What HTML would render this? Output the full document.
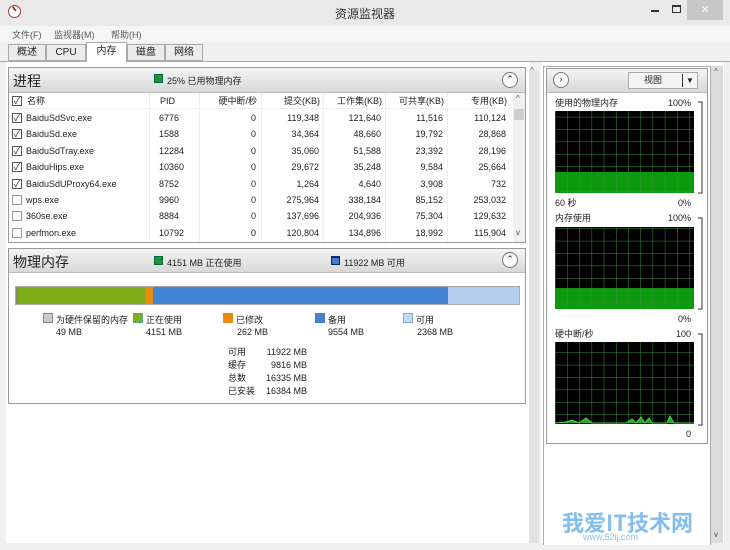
<!DOCTYPE html>
<html><head><meta charset="utf-8"><style>
*{margin:0;padding:0;box-sizing:border-box}
body{width:730px;height:550px;overflow:hidden;background:#f0f0f0;font-family:"Liberation Sans","Noto Sans CJK SC",sans-serif;font-size:9px;color:#222;position:relative}
.a{position:absolute}
.hdr{background:linear-gradient(#f4f4f4,#d8d8d8);border-bottom:1px solid #bbb}
.cb{position:absolute;width:10px;height:10px;border:1px solid #555;background:#fff;font-size:9px;line-height:8px;text-align:center}
.r{text-align:right}
.row{position:absolute;left:0;width:504px;height:16px;line-height:16px}
.row span{position:absolute}
.up{position:absolute;width:16px;height:16px;border-radius:50%;border:1px solid #777;background:#fafafa;font-size:9px;text-align:center;line-height:13px}
.tab{position:absolute;top:44px;height:17px;border:1px solid #aaa;background:#ececec;text-align:center;line-height:15px;font-size:10px}
</style></head><body>
<div class="a" style="left:0;top:0;width:730px;height:26px;background:#e9e9e9"></div>
<div class="a" style="left:8px;top:5px;width:13px;height:13px;border-radius:50%;border:1.5px solid #a33;background:#fff"></div>
<div class="a" style="left:12px;top:8px;width:5px;height:1.5px;background:#a33;transform:rotate(50deg)"></div>
<div class="a" style="left:335px;top:5px;font-size:12px;color:#333">资源监视器</div>
<div class="a" style="left:651px;top:10px;width:8px;height:2px;background:#333"></div>
<div class="a" style="left:672px;top:5px;width:9px;height:8px;border:1px solid #333;border-top-width:2px"></div>
<div class="a" style="left:687px;top:0;width:36px;height:20px;background:#c7c7c7;color:#fff;text-align:center;font-size:11px;line-height:20px">✕</div>
<div class="a" style="left:0;top:26px;width:730px;height:16px;background:#f5f6f7"></div>
<div class="a" style="left:12px;top:28px;color:#555">文件(F)</div>
<div class="a" style="left:54px;top:28px;color:#555">监视器(M)</div>
<div class="a" style="left:111px;top:28px;color:#555">帮助(H)</div>
<div class="tab" style="left:8px;width:38px">概述</div>
<div class="tab" style="left:46px;width:40px">CPU</div>
<div class="tab" style="left:86px;top:42px;width:41px;height:20px;border-bottom:none;background:#fff;z-index:2;line-height:17px">内存</div>
<div class="tab" style="left:127px;width:38px">磁盘</div>
<div class="tab" style="left:165px;width:38px">网络</div>
<div class="a" style="left:0;top:61px;width:730px;height:489px;background:#fff;border-top:1px solid #aaa"></div>
<div class="a" style="left:0;top:62px;width:6px;height:488px;background:#f0f0f0"></div>
<div class="a" style="left:724px;top:62px;width:6px;height:488px;background:#f0f0f0"></div>
<div class="a" style="left:0;top:543px;width:730px;height:7px;background:#f0f0f0"></div>
<div class="a" style="left:530px;top:62px;width:11px;height:481px;background:#f0f0f0"></div>
<div class="a" style="left:529px;top:70px;width:10px;height:473px;background:#e2e2e2"></div>
<div class="a" style="left:530px;top:66px;color:#555;font-size:8px">^</div>
<div class="a" style="left:8px;top:67px;width:518px;height:176px;border:1px solid #999;background:#fff">
 <div class="a hdr" style="left:0;top:0;width:516px;height:25px"></div>
 <div class="a" style="left:4px;top:3px;font-size:14px">进程</div>
 <div class="a" style="left:145px;top:6px;width:9px;height:9px;background:#1a9a2a;border:1px solid #064"></div>
 <div class="a" style="left:158px;top:6px">25% 已用物理内存</div>
 <div class="up" style="left:493px;top:4px">⌃</div>
 <div class="a" style="left:0;top:25px;width:504px;height:16px;line-height:16px;border-bottom:1px solid #eee">
  <div class="cb" style="left:3px;top:3px">✓</div>
  <span class="a" style="left:18px">名称</span><span class="a" style="left:151px">PID</span>
  <span class="a r" style="right:256px">硬中断/秒</span><span class="a r" style="right:193px">提交(KB)</span><span class="a r" style="right:131px">工作集(KB)</span><span class="a r" style="right:69px">可共享(KB)</span><span class="a r" style="right:6px">专用(KB)</span>
 </div>
 <div class="a" style="left:504px;top:25px;width:12px;height:149px;background:#f0f0f0"></div>
 <div class="a" style="left:505px;top:41px;width:10px;height:11px;background:#cdcdcd"></div>
 <div class="a" style="left:507px;top:26px;font-size:8px;color:#555">^</div>
 <div class="a" style="left:507px;top:160px;font-size:8px;color:#555">v</div>
</div>
<div class="a" style="left:8px;top:110px;width:504px;height:132px">
 <div class="row" style="top:0"><div class="cb" style="left:4px;top:3px">✓</div><span style="left:18px">BaiduSdSvc.exe</span><span style="left:151px">6776</span><span style="right:256px">0</span><span style="right:193px">119,348</span><span style="right:131px">121,640</span><span style="right:69px">11,516</span><span style="right:6px">110,124</span></div>
 <div class="row" style="top:16px"><div class="cb" style="left:4px;top:3px">✓</div><span style="left:18px">BaiduSd.exe</span><span style="left:151px">1588</span><span style="right:256px">0</span><span style="right:193px">34,364</span><span style="right:131px">48,660</span><span style="right:69px">19,792</span><span style="right:6px">28,868</span></div>
 <div class="row" style="top:33px"><div class="cb" style="left:4px;top:3px">✓</div><span style="left:18px">BaiduSdTray.exe</span><span style="left:151px">12284</span><span style="right:256px">0</span><span style="right:193px">35,060</span><span style="right:131px">51,588</span><span style="right:69px">23,392</span><span style="right:6px">28,196</span></div>
 <div class="row" style="top:49px"><div class="cb" style="left:4px;top:3px">✓</div><span style="left:18px">BaiduHips.exe</span><span style="left:151px">10360</span><span style="right:256px">0</span><span style="right:193px">29,672</span><span style="right:131px">35,248</span><span style="right:69px">9,584</span><span style="right:6px">25,664</span></div>
 <div class="row" style="top:66px"><div class="cb" style="left:4px;top:3px">✓</div><span style="left:18px">BaiduSdUProxy64.exe</span><span style="left:151px">8752</span><span style="right:256px">0</span><span style="right:193px">1,264</span><span style="right:131px">4,640</span><span style="right:69px">3,908</span><span style="right:6px">732</span></div>
 <div class="row" style="top:82px"><div class="cb" style="left:4px;top:3px;border-color:#999"></div><span style="left:18px">wps.exe</span><span style="left:151px">9960</span><span style="right:256px">0</span><span style="right:193px">275,964</span><span style="right:131px">338,184</span><span style="right:69px">85,152</span><span style="right:6px">253,032</span></div>
 <div class="row" style="top:98px"><div class="cb" style="left:4px;top:3px;border-color:#999"></div><span style="left:18px">360se.exe</span><span style="left:151px">8884</span><span style="right:256px">0</span><span style="right:193px">137,696</span><span style="right:131px">204,936</span><span style="right:69px">75,304</span><span style="right:6px">129,632</span></div>
 <div class="row" style="top:115px"><div class="cb" style="left:4px;top:3px;border-color:#999"></div><span style="left:18px">perfmon.exe</span><span style="left:151px">10792</span><span style="right:256px">0</span><span style="right:193px">120,804</span><span style="right:131px">134,896</span><span style="right:69px">18,992</span><span style="right:6px">115,904</span></div>
</div>
<div class="a" style="left:149px;top:93px;width:1px;height:149px;background:#eee"></div>
<div class="a" style="left:199px;top:93px;width:1px;height:149px;background:#eee"></div>
<div class="a" style="left:261px;top:93px;width:1px;height:149px;background:#eee"></div>
<div class="a" style="left:323px;top:93px;width:1px;height:149px;background:#eee"></div>
<div class="a" style="left:385px;top:93px;width:1px;height:149px;background:#eee"></div>
<div class="a" style="left:447px;top:93px;width:1px;height:149px;background:#eee"></div>
<div class="a" style="left:8px;top:248px;width:518px;height:156px;border:1px solid #999;background:#fff">
 <div class="a hdr" style="left:0;top:0;width:516px;height:24px"></div>
 <div class="a" style="left:4px;top:3px;font-size:14px">物理内存</div>
 <div class="a" style="left:145px;top:7px;width:9px;height:9px;background:#1a9a2a;border:1px solid #064"></div>
 <div class="a" style="left:158px;top:7px">4151 MB 正在使用</div>
 <div class="a" style="left:322px;top:7px;width:9px;height:9px;background:#3a7fd0;border:1px solid #126;border-top-width:2px"></div>
 <div class="a" style="left:335px;top:7px">11922 MB 可用</div>
 <div class="up" style="left:493px;top:3px">⌃</div>
 <div class="a" style="left:6px;top:37px;width:505px;height:19px;border:1px solid #aaa;display:flex">
  <div style="width:2px;background:#888"></div><div style="width:128px;background:#7fae18"></div><div style="width:7px;background:#e88c10"></div><div style="width:295px;background:#4584d2"></div><div style="flex:1;background:#b3cdef"></div>
 </div>
 <div class="a" style="left:34px;top:64px;width:10px;height:10px;background:#c8c8c8;border:1px solid #888"></div><div class="a" style="left:47px;top:64px">为硬件保留的内存</div><div class="a" style="left:47px;top:78px">49 MB</div>
 <div class="a" style="left:124px;top:64px;width:10px;height:10px;background:#7fae18;border:1px solid #5a8"></div><div class="a" style="left:137px;top:64px">正在使用</div><div class="a" style="left:137px;top:78px">4151 MB</div>
 <div class="a" style="left:214px;top:64px;width:10px;height:10px;background:#e88c10"></div><div class="a" style="left:227px;top:64px">已修改</div><div class="a" style="left:228px;top:78px">262 MB</div>
 <div class="a" style="left:306px;top:64px;width:10px;height:10px;background:#4584d2"></div><div class="a" style="left:319px;top:64px">备用</div><div class="a" style="left:319px;top:78px">9554 MB</div>
 <div class="a" style="left:394px;top:64px;width:10px;height:10px;background:#c4d8f2;border:1px solid #8ab"></div><div class="a" style="left:407px;top:64px">可用</div><div class="a" style="left:408px;top:78px">2368 MB</div>
 <div class="a" style="left:219px;top:97px;line-height:13px">可用<br>缓存<br>总数<br>已安装</div>
 <div class="a r" style="left:250px;top:97px;width:48px;line-height:13px">11922 MB<br>9816 MB<br>16335 MB<br>16384 MB</div>
</div>
<div class="a" style="left:543px;top:66px;width:168px;height:479px;border:1px solid #aaa;border-bottom:none;background:#fff"></div>
<div class="a" style="left:711px;top:66px;width:12px;height:477px;background:#dcdcdc"></div>
<div class="a" style="left:714px;top:67px;font-size:8px;color:#555">^</div>
<div class="a" style="left:714px;top:530px;font-size:8px;color:#555">v</div>
<div class="a" style="left:546px;top:68px;width:162px;height:376px;border:1px solid #999;background:#fff">
 <div class="a hdr" style="left:0;top:0;width:160px;height:24px"></div>
 <div class="up" style="left:6px;top:3px">›</div>
 <div class="a" style="left:81px;top:3px;width:70px;height:17px;border:1px solid #aaa;background:#f5f5f5;line-height:15px"><span style="margin-left:15px">视图</span><span class="a" style="left:53px;top:1px;width:1px;height:13px;background:#333"></span><span class="a" style="left:57px;top:0;font-size:8px">▼</span></div>
</div>
<svg class="a" style="left:546px;top:92px" width="164" height="350">
 <defs><pattern id="g" width="12.2" height="12.4" patternUnits="userSpaceOnUse" x="9" y="0"><path d="M0 0V13M0 0H13" stroke="#3a8f3a" stroke-width="1" fill="none"/></pattern></defs>
 <g font-family="Liberation Sans,Noto Sans CJK SC,sans-serif" font-size="9" fill="#222">
 <text x="9" y="14">使用的物理内存</text><text x="145" y="14" text-anchor="end">100%</text>
 <rect x="9" y="19" width="139" height="82" fill="#000"/><rect x="9" y="80" width="139" height="21" fill="#0b9a0b"/><rect x="9" y="19" width="139" height="82" fill="url(#g)"/>
 <text x="9" y="114">60 秒</text><text x="145" y="114" text-anchor="end">0%</text>
 <text x="9" y="129">内存使用</text><text x="145" y="129" text-anchor="end">100%</text>
 <rect x="9" y="135" width="139" height="82" fill="#000"/><rect x="9" y="196" width="139" height="21" fill="#0b9a0b"/><rect x="9" y="135" width="139" height="82" fill="url(#g)"/>
 <text x="145" y="230" text-anchor="end">0%</text>
 <text x="9" y="245">硬中断/秒</text><text x="145" y="245" text-anchor="end">100</text>
 <rect x="9" y="250" width="139" height="82" fill="#000"/><rect x="9" y="250" width="139" height="82" fill="url(#g)"/>
 <path d="M9 331L20 330 26 328 33 331 40 326 46 331 80 331 86 327 90 331 95 325 99 331 103 326 106 331 121 331 124 324 128 331 148 331" stroke="#5c5" fill="#2a2" />
 <text x="145" y="345" text-anchor="end">0</text>
 </g>
 <path d="M152 10h4v91h-4M152 126h4v91h-4M152 242h4v91h-4" stroke="#333" fill="none"/>
</svg>
<div class="a" style="left:562px;top:506px;font-size:22px;font-weight:bold;color:#5aa9e6;opacity:.75;font-family:'Noto Sans CJK SC',sans-serif">我爱IT技术网</div>
<div class="a" style="left:583px;top:532px;font-size:9px;color:#5aa9e6;opacity:.7">www.52ij.com</div>
</body></html>
